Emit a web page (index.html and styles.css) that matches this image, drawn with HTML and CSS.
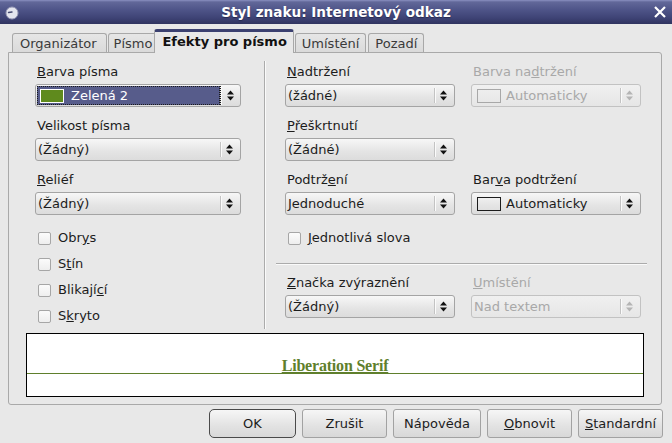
FILE: index.html
```html
<!DOCTYPE html>
<html lang="cs">
<head>
    <meta charset="UTF-8">
    <title>Styl znaku: Internetový odkaz</title>
    <link rel="stylesheet" href="styles.css">
</head>
<body>

    <div class="dialog">
        <!-- Title bar -->
        <div class="titlebar">
            <span class="app-icon">
                <svg width="14" height="14" viewBox="0 0 14 14">
                    <circle cx="7" cy="7" r="6" fill="#e4e5ee" stroke="#9a9cb8" stroke-width="1"/>
                    <path d="M3.5 6.5 L7 6" stroke="#444a70" stroke-width="1.4" stroke-linecap="round"/>
                </svg>
            </span>
            <span class="title">Styl znaku: Internetový odkaz</span>
            <span class="close">
                <svg width="14" height="12" viewBox="0 0 14 12">
                    <path d="M2 1 L12 11 M12 1 L2 11" stroke="#fff" stroke-width="2.2"/>
                </svg>
            </span>
        </div>

        <div class="content">
            <!-- Tabs -->
            <div class="tabs">
                <div class="tab tab-org">Organizátor</div>
                <div class="tab tab-pismo">Písmo</div>
                <div class="tab active">Efekty pro písmo</div>
                <div class="tab tab-umisteni">Umístění</div>
                <div class="tab tab-pozadi">Pozadí</div>
            </div>

            <div class="panel">
                <div class="cols">
                    <!-- Left column -->
                    <div class="col-left">
                        <div class="field">
                            <div class="label"><u>B</u>arva písma</div>
                            <div class="combo">
                                <span class="value focused"><span class="swatch green"></span>Zelená 2</span>
                                <span class="spin"><svg width="7" height="11" viewBox="0 0 7 11"><path d="M0 4.5 L3.5 0.5 L7 4.5 Z M0 6.5 L3.5 10.5 L7 6.5 Z" fill="#111"/></svg></span>
                            </div>
                        </div>
                        <div class="field">
                            <div class="label">Velikost písma</div>
                            <div class="combo">
                                <span class="value">(Žádný)</span>
                                <span class="spin"><svg width="7" height="11" viewBox="0 0 7 11"><path d="M0 4.5 L3.5 0.5 L7 4.5 Z M0 6.5 L3.5 10.5 L7 6.5 Z" fill="#111"/></svg></span>
                            </div>
                        </div>
                        <div class="field">
                            <div class="label"><u>R</u>eliéf</div>
                            <div class="combo">
                                <span class="value">(Žádný)</span>
                                <span class="spin"><svg width="7" height="11" viewBox="0 0 7 11"><path d="M0 4.5 L3.5 0.5 L7 4.5 Z M0 6.5 L3.5 10.5 L7 6.5 Z" fill="#111"/></svg></span>
                            </div>
                        </div>
                        <div class="checks">
                            <div class="check"><span class="box"></span>Obr<u>y</u>s</div>
                            <div class="check"><span class="box"></span>S<u>t</u>ín</div>
                            <div class="check"><span class="box"></span>Blikají<u>c</u>í</div>
                            <div class="check"><span class="box"></span>S<u>k</u>ryto</div>
                        </div>
                    </div>

                    <div class="vsep"></div>

                    <!-- Right column -->
                    <div class="col-right">
                        <div class="grid">
                            <div class="field">
                                <div class="label"><u>N</u>adtržení</div>
                                <div class="combo">
                                    <span class="value">(žádné)</span>
                                    <span class="spin"><svg width="7" height="11" viewBox="0 0 7 11"><path d="M0 4.5 L3.5 0.5 L7 4.5 Z M0 6.5 L3.5 10.5 L7 6.5 Z" fill="#111"/></svg></span>
                                </div>
                            </div>
                            <div class="field disabled">
                                <div class="label">Barva na<u>d</u>tržení</div>
                                <div class="combo">
                                    <span class="value"><span class="swatch"></span>Automaticky</span>
                                    <span class="spin"><svg width="7" height="11" viewBox="0 0 7 11"><path d="M0 4.5 L3.5 0.5 L7 4.5 Z M0 6.5 L3.5 10.5 L7 6.5 Z" fill="#b4b4b4"/></svg></span>
                                </div>
                            </div>
                            <div class="field">
                                <div class="label"><u>P</u>řeškrtnutí</div>
                                <div class="combo">
                                    <span class="value">(Žádné)</span>
                                    <span class="spin"><svg width="7" height="11" viewBox="0 0 7 11"><path d="M0 4.5 L3.5 0.5 L7 4.5 Z M0 6.5 L3.5 10.5 L7 6.5 Z" fill="#111"/></svg></span>
                                </div>
                            </div>
                            <div></div>
                            <div class="field">
                                <div class="label">Podtrž<u>e</u>ní</div>
                                <div class="combo">
                                    <span class="value">Jednoduché</span>
                                    <span class="spin"><svg width="7" height="11" viewBox="0 0 7 11"><path d="M0 4.5 L3.5 0.5 L7 4.5 Z M0 6.5 L3.5 10.5 L7 6.5 Z" fill="#111"/></svg></span>
                                </div>
                            </div>
                            <div class="field">
                                <div class="label">Bar<u>v</u>a podtržení</div>
                                <div class="combo">
                                    <span class="value"><span class="swatch"></span>Automaticky</span>
                                    <span class="spin"><svg width="7" height="11" viewBox="0 0 7 11"><path d="M0 4.5 L3.5 0.5 L7 4.5 Z M0 6.5 L3.5 10.5 L7 6.5 Z" fill="#111"/></svg></span>
                                </div>
                            </div>
                        </div>

                        <div class="check check-words"><span class="box"></span><u>J</u>ednotlivá slova</div>

                        <div class="hsep"></div>

                        <div class="grid">
                            <div class="field">
                                <div class="label"><u>Z</u>načka zvýraznění</div>
                                <div class="combo">
                                    <span class="value">(Žádný)</span>
                                    <span class="spin"><svg width="7" height="11" viewBox="0 0 7 11"><path d="M0 4.5 L3.5 0.5 L7 4.5 Z M0 6.5 L3.5 10.5 L7 6.5 Z" fill="#111"/></svg></span>
                                </div>
                            </div>
                            <div class="field disabled">
                                <div class="label"><u>U</u>místění</div>
                                <div class="combo">
                                    <span class="value">Nad textem</span>
                                    <span class="spin"><svg width="7" height="11" viewBox="0 0 7 11"><path d="M0 4.5 L3.5 0.5 L7 4.5 Z M0 6.5 L3.5 10.5 L7 6.5 Z" fill="#b4b4b4"/></svg></span>
                                </div>
                            </div>
                        </div>
                    </div>
                </div>

                <!-- Preview -->
                <div class="preview">
                    <div class="preview-line"><span class="preview-text">Liberation Serif</span></div>
                </div>
            </div>

            <!-- Buttons -->
            <div class="buttons">
                <div class="btn default">OK</div>
                <div class="btn">Zrušit</div>
                <div class="btn">Nápověda</div>
                <div class="btn"><u>O</u>bnovit</div>
                <div class="btn"><u>S</u>tandardní</div>
            </div>
        </div>
    </div>

</body>
</html>
```

FILE: styles.css
```css
body {
    margin: 0;
    font-family: 'DejaVu Sans', 'Noto Sans', sans-serif;
    font-size: 13px;
    color: #1c1c1c;
}

.dialog {
    width: 672px;
    height: 443px;
    background: #e8e8e8;
    overflow: hidden;
}

/* Title bar */

.titlebar {
    height: 24px;
    display: grid;
    grid-template-columns: 24px 1fr 24px;
    align-items: center;
    background: linear-gradient(to bottom, #8a90c0 0px, #626899 2px, #50568a 9px, #3e4375 18px, #30345f 24px);
}

.app-icon {
    display: flex;
    padding-left: 5px;
    padding-top: 1px;
}

.title {
    text-align: center;
    color: #fff;
    font-weight: bold;
    font-size: 13.6px;
    text-shadow: 0 1px 1px #262a50;
}

.close {
    display: flex;
    justify-content: flex-end;
    padding-right: 5px;
}

.content {
    padding: 0 10px 0 8px;
}

/* Tabs */

.tabs {
    display: flex;
    align-items: flex-end;
    height: 24px;
    margin-top: 5px;
    padding-left: 4px;
    position: relative;
    z-index: 2;
}

.tab {
    height: 18px;
    line-height: 19px;
    margin-bottom: 1px;
    border: 1px solid #a8a8a8;
    border-bottom: none;
    border-radius: 3px 3px 0 0;
    background: linear-gradient(to bottom, #e6e6e6, #dadada);
    color: #3a3a3a;
    white-space: nowrap;
}

.tab-org {
    padding: 0 9px 0 7px;
}

.tab-pismo {
    margin-left: 1px;
    padding: 0 6px 0 5px;
}

.tab-umisteni {
    margin-left: 1px;
    padding: 0 6px;
}

.tab-pozadi {
    margin-left: 2px;
    padding: 0 6px;
}

.tab.active {
    height: 21px;
    line-height: 20px;
    margin-bottom: 0;
    margin-left: -5px;
    padding: 0 6px 0 7px;
    background: #e8e8e8;
    border-top: 3px solid #3b4070;
    border-color: #3b4070 #a8a8a8 #a8a8a8 #a8a8a8;
    color: #111;
    font-weight: bold;
    position: relative;
}

/* Panel */

.panel {
    margin-top: -1px;
    border: 1px solid #a9a9a9;
    border-radius: 0 3px 3px 3px;
    position: relative;
    z-index: 1;
}

.cols {
    display: flex;
    height: 265px;
    padding-top: 11px;
}

.col-left {
    width: 206px;
    margin-left: 26px;
}

.vsep {
    width: 1px;
    margin: -3px 0 0 23px;
    background: #ababab;
    border-right: 1px solid #fafafa;
}

.col-right {
    width: 379px;
    margin-left: 10px;
}

.grid {
    display: grid;
    grid-template-columns: 170px 170px;
    column-gap: 16px;
    row-gap: 11px;
    padding-left: 9px;
}

.field {
    display: flex;
    flex-direction: column;
    gap: 4px;
}

.col-left .field {
    margin-bottom: 11px;
}

.label {
    line-height: 16px;
    padding-left: 2px;
    white-space: nowrap;
}

/* Combo boxes */

.combo {
    display: flex;
    height: 21px;
    border: 1px solid #a4a4a4;
    border-radius: 3px;
    background: linear-gradient(to bottom, #f7f7f7, #e4e4e4 60%, #dcdcdc);
}

.combo .value {
    flex: 1;
    display: flex;
    align-items: center;
    padding-left: 2px;
    white-space: nowrap;
}

.combo .value.focused {
    margin: 1px 0 1px 1px;
    padding-left: 3px;
    background: #575c8b;
    color: #fff;
    outline: 1px dotted #1a1a1a;
    outline-offset: -1px;
}

.swatch {
    width: 22px;
    height: 12px;
    margin: 0 5px 0 3px;
    border: 1px solid #1c1c1c;
}

.swatch.green {
    margin: 0 7px 0 0;
    border-color: #fff;
    background: #5f8a1d;
}

.spin {
    width: 20px;
    display: flex;
    align-items: center;
    padding-left: 5px;
    box-sizing: border-box;
    margin: 3px 0;
    border-left: 1px solid #c3c3c3;
    box-shadow: inset 1px 0 #fbfbfb;
}

.focused + .spin {
    margin: 1px 0;
    border-left: 1px dotted #1a1a1a;
    padding-left: 6px;
}

.disabled .label,
.disabled .combo {
    color: #a8a8a8;
}

.disabled .combo {
    border-color: #c2c2c2;
    background: linear-gradient(to bottom, #f0f0f0, #e6e6e6);
}

.disabled .swatch {
    border-color: #a8a8a8;
}

/* Check boxes */

.checks {
    display: flex;
    flex-direction: column;
    gap: 10px;
    margin-top: 15px;
    padding-left: 3px;
}

.check {
    display: flex;
    align-items: center;
    line-height: 16px;
    white-space: nowrap;
}

.box {
    width: 11px;
    height: 11px;
    margin-right: 7px;
    border: 1px solid #a6a6a6;
    border-radius: 2px;
    background: linear-gradient(to bottom, #fbfbfb, #eeeeee);
}

.check-words {
    margin-top: 15px;
    padding-left: 12px;
}

.hsep {
    width: 371px;
    height: 1px;
    margin: 17px 0 10px;
    background: #ababab;
    border-bottom: 1px solid #fafafa;
}

/* Preview */

.preview {
    height: 62px;
    margin: 4px 17px 7px 17px;
    border: 1px solid #000;
    background: #fff;
}

.preview-line {
    height: 39px;
    display: flex;
    justify-content: center;
    align-items: flex-end;
    border-bottom: 1px solid #5f7f2c;
}

.preview-text {
    font-family: 'Liberation Serif', serif;
    font-size: 16px;
    font-weight: bold;
    letter-spacing: -0.2px;
    line-height: 16px;
    color: #5f7f2c;
    text-decoration: underline;
    margin-bottom: -1px;
}

/* Buttons */

.buttons {
    display: flex;
    justify-content: flex-end;
    gap: 6px;
    margin: 4px -1px 0 0;
}

.btn {
    min-width: 81px;
    height: 27px;
    line-height: 27px;
    padding: 0 1px;
    text-align: center;
    border: 1px solid #a2a2a2;
    border-radius: 3px;
    background: linear-gradient(to bottom, #f6f6f6, #e2e2e2 60%, #d8d8d8);
    white-space: nowrap;
}

.btn.default {
    min-width: 83px;
    border-color: #4a4a4a;
    border-radius: 5px;
}

.btn:nth-child(3) {
    min-width: 84px;
}
```
